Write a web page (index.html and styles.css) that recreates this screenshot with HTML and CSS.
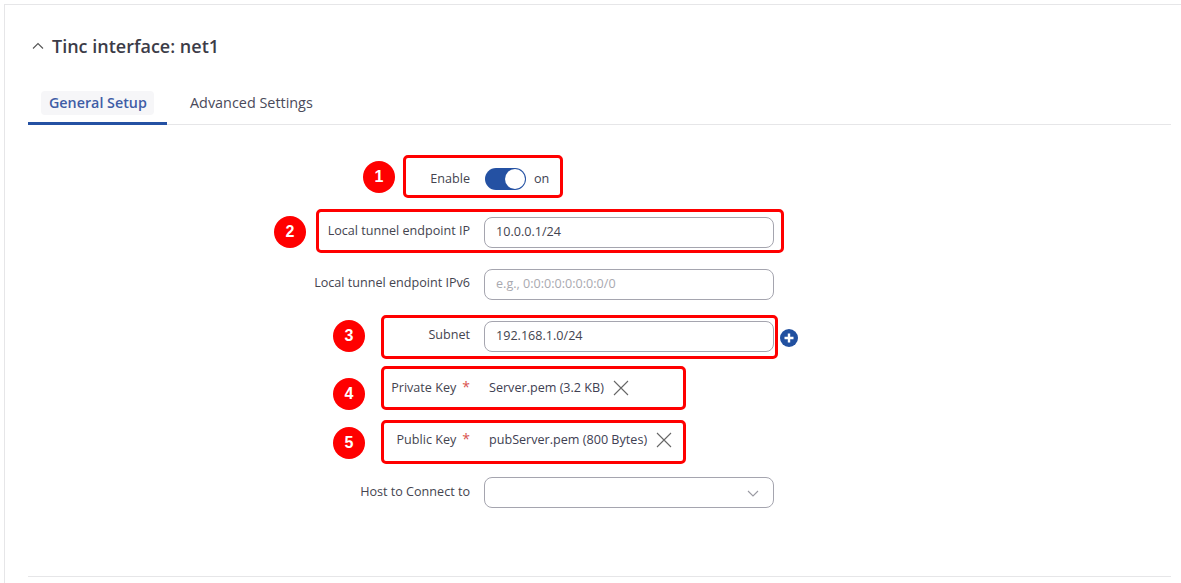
FILE: index.html
```html
<!DOCTYPE html>
<html lang="en">
<head>
<meta charset="utf-8">
<title>Tinc interface: net1</title>
<link rel="stylesheet" href="styles.css">
</head>
<body>
<main class="card">
  <header class="head">
    <svg class="chev-up" width="12" height="8" viewBox="0 0 12 8"><path d="M1 6.5 6 1.5l5 5" fill="none" stroke="#555" stroke-width="1.1"/></svg>
    <h1 class="title">Tinc interface: net1</h1>
  </header>
  <nav class="tabs">
    <div class="tab tab-active"><span class="tab-pill">General Setup</span></div>
    <div class="tab"><span class="tab-plain">Advanced Settings</span></div>
  </nav>
  <form class="form">
    <div class="row">
      <label class="label">Enable</label>
      <div class="ctrl ctrl-toggle">
        <span class="toggle"><span class="knob"></span></span>
        <span class="on">on</span>
      </div>
    </div>
    <div class="row">
      <label class="label">Local tunnel endpoint IP</label>
      <div class="ctrl"><div class="input">10.0.0.1/24</div></div>
    </div>
    <div class="row">
      <label class="label">Local tunnel endpoint IPv6</label>
      <div class="ctrl"><div class="input input-ph">e.g., 0:0:0:0:0:0:0:0/0</div></div>
    </div>
    <div class="row">
      <label class="label">Subnet</label>
      <div class="ctrl">
        <div class="input">192.168.1.0/24</div>
        <svg class="plus" width="18" height="18" viewBox="0 0 18 18"><circle cx="9" cy="9" r="9" fill="#2150a0"/><path d="M9 4.5v9M4.5 9h9" stroke="#fff" stroke-width="2.4"/></svg>
      </div>
    </div>
    <div class="row">
      <label class="label">Private Key<span class="req">*</span></label>
      <div class="ctrl ctrl-file">
        <span class="file">Server.pem (3.2 KB)</span>
        <svg class="x" width="16" height="16" viewBox="0 0 16 16"><path d="M1 1l14 14M15 1 1 15" stroke="#666" stroke-width="1.1" fill="none"/></svg>
      </div>
    </div>
    <div class="row">
      <label class="label">Public Key<span class="req">*</span></label>
      <div class="ctrl ctrl-file">
        <span class="file">pubServer.pem (800 Bytes)</span>
        <svg class="x" width="16" height="16" viewBox="0 0 16 16"><path d="M1 1l14 14M15 1 1 15" stroke="#666" stroke-width="1.1" fill="none"/></svg>
      </div>
    </div>
    <div class="row">
      <label class="label label-host">Host to Connect to</label>
      <div class="ctrl">
        <div class="input input-select">
          <svg class="select-chev" width="12" height="7" viewBox="0 0 12 7"><path d="M1 1l5 5 5-5" fill="none" stroke="#9a9aa2" stroke-width="1.1"/></svg>
        </div>
      </div>
    </div>
  </form>
  <div class="foot"></div>
</main>

<div class="mark mark-1"></div>
<div class="mark mark-2"></div>
<div class="mark mark-3"></div>
<div class="mark mark-4"></div>
<div class="mark mark-5"></div>
<div class="badge badge-1">1</div>
<div class="badge badge-2">2</div>
<div class="badge badge-3">3</div>
<div class="badge badge-4">4</div>
<div class="badge badge-5">5</div>
</body>
</html>
```
FILE: styles.css
```css
* { box-sizing: border-box; }
html, body { margin: 0; height: 583px; overflow: hidden; background: #fff; }
body { font-family: "Open Sans", "Noto Sans", sans-serif; color: #404052; position: relative; }

.card {
  margin: 4px 0 0 4px;
  height: 579px;
  border-top: 1px solid #e6e6e8;
  border-left: 1px solid #e6e6e8;
  padding: 0 10px 0 23px;
  display: flex;
  flex-direction: column;
}

.head { display: flex; align-items: center; height: 26px; margin-top: 28px; gap: 8px; padding-left: 4px; }
.chev-up { flex: none; }
.title { margin: 0; font-size: 18px; font-weight: 600; color: #3c3c48; line-height: 26px; }

.tabs { display: flex; height: 35px; margin-top: 31px; border-bottom: 1px solid #e6e6e8; }
.tab { padding: 0 13px; height: 35px; }
.tab-active { border-bottom: 3px solid #2451a3; width: 139px; margin-right: 10px; }
.tab-pill { display: inline-block; background: #f6f6f8; border-radius: 4px; padding: 0 7px 0 8px; height: 24px; line-height: 24px; margin-top: 1px; font-size: 14.3px; font-weight: 600; color: #3f5da6; white-space: nowrap; }
.tab-plain { display: inline-block; height: 24px; line-height: 24px; margin-top: 1px; font-size: 14.4px; color: #4a4a5a; white-space: nowrap; }

.form { display: flex; flex-direction: column; gap: 21px; margin-top: 40px; flex: 1; }
.row { display: flex; height: 31px; }
.label { width: 442px; text-align: right; font-size: 12.6px; line-height: 17px; padding-top: 5px; flex: none; color: #44444f; white-space: nowrap; }
.label-host { padding-top: 6px; }
.req { color: #d9534f; margin-left: 6px; font-size: 14px; }
.ctrl { display: flex; align-items: center; margin-left: 14px; }
.input { width: 290px; height: 31px; border: 1px solid #a5a5af; border-radius: 8px; padding: 0 11px; font-size: 12.6px; line-height: 28px; color: #44444f; }
.input-ph { color: #a9a9b0; }
.input-select { display: flex; align-items: center; justify-content: flex-end; padding-right: 14px; }
.select-chev { margin-top: 1px; }
.plus { margin-left: 6px; margin-top: 3px; flex: none; }

.ctrl-toggle { gap: 8px; align-items: flex-start; padding-top: 3px; margin-left: 15px; }
.toggle { display: block; width: 41px; height: 22px; border-radius: 11px; background: #2451a3; position: relative; }
.knob { position: absolute; right: 1px; top: 1px; width: 20px; height: 20px; border-radius: 50%; background: #fff; }
.on { font-size: 12.6px; line-height: 22px; }

.ctrl-file { gap: 9px; margin-left: 19px; align-items: flex-start; padding-top: 6px; }
.file { font-size: 12.6px; line-height: 17px; white-space: nowrap; }
.x { margin-top: 1px; }

.foot { border-top: 1px solid #e6e6e8; height: 7px; flex: none; }

.mark { position: absolute; border: 3px solid #f00; border-radius: 5px; }
.mark-1 { left: 403px; top: 155px; width: 160px; height: 43px; }
.mark-2 { left: 316px; top: 209px; width: 468px; height: 44px; }
.mark-3 { left: 381px; top: 315px; width: 397px; height: 44px; }
.mark-4 { left: 381px; top: 366px; width: 305px; height: 44px; }
.mark-5 { left: 381px; top: 420px; width: 305px; height: 44px; }

.badge { position: absolute; width: 32px; height: 32px; border-radius: 50%; background: #f00; color: #fff; font-family: "Liberation Sans", sans-serif; font-weight: 700; font-size: 16px; line-height: 32px; text-align: center; }
.badge-1 { left: 363px; top: 161px; }
.badge-2 { left: 274px; top: 216px; }
.badge-3 { left: 333px; top: 320px; }
.badge-4 { left: 333px; top: 378px; }
.badge-5 { left: 333px; top: 427px; }
```
